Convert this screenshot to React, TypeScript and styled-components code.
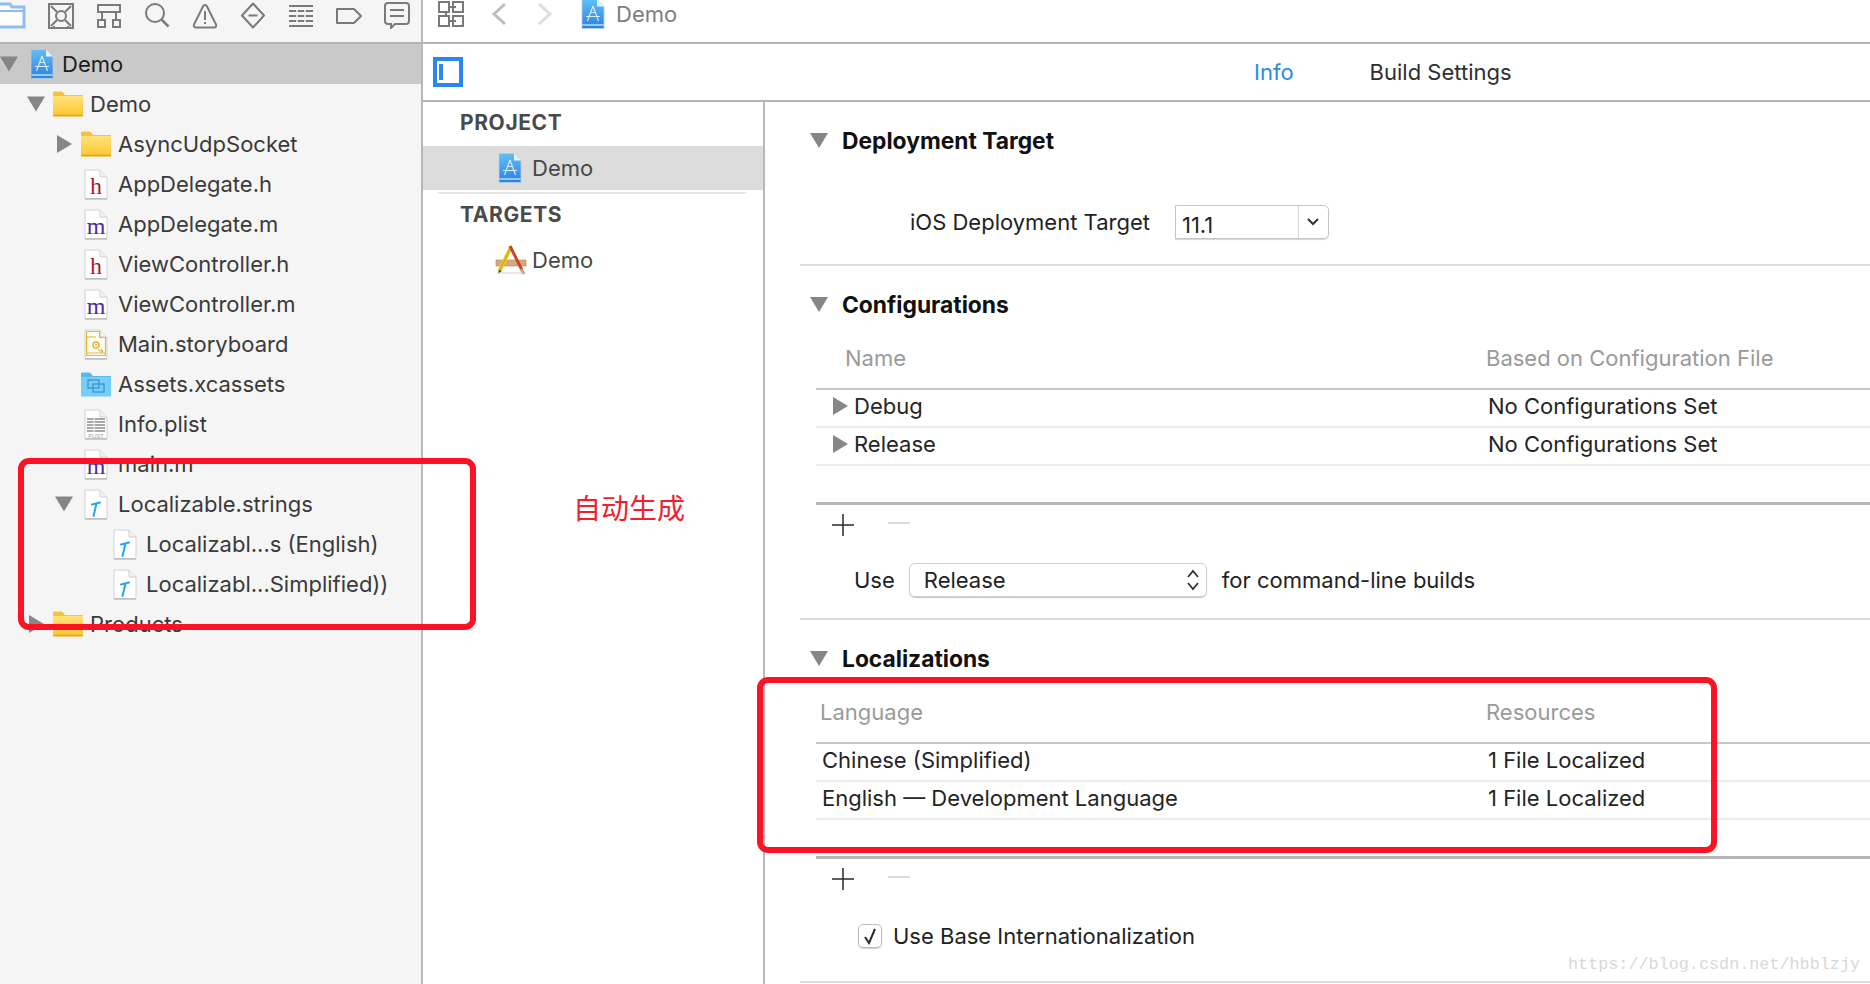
import React from "react";
import styled, { createGlobalStyle } from "styled-components";

const GlobalStyle = createGlobalStyle`
  html, body { margin: 0; padding: 0; background: #fff; }
  body { font-family: Inter, Roboto, "Liberation Sans", sans-serif; font-size: 22px; }
  * { box-sizing: border-box; }
`;

const Page = styled.div`
  position: relative;
  display: grid;
  grid-template-columns: 423px 1fr;
  width: 1870px;
  height: 984px;
  overflow: hidden;
`;

/* navigator */
const Navigator = styled.div`
  background: #f5f5f5;
  border-right: 2px solid #b8b8b8;
  height: 984px;
  overflow: hidden;
`;
const NavTools = styled.div`
  display: flex;
  gap: 22px;
  height: 44px;
  padding: 2px 0 0 0;
  border-bottom: 2px solid #b4b4b4;
  svg { display: block; flex: none; }
`;
const NavRow = styled.div<{ $depth: number; $selected?: boolean }>`
  position: relative;
  display: flex;
  align-items: center;
  height: 40px;
  padding-left: ${(p) => [29, 53, 81, 111][p.$depth]}px;
  background: ${(p) => (p.$selected ? "#c9c9c9" : "transparent")};
  color: ${(p) => (p.$selected ? "#1c1c1c" : "#3a3a3a")};
  font-size: 22px;
`;
const NavIcon = styled.span<{ $w: number }>`
  display: flex;
  justify-content: center;
  width: ${(p) => p.$w}px;
  flex: none;
  margin-right: 7px;
`;
const Arrow = styled.span<{ $open?: boolean; $size?: number }>`
  flex: none;
  width: 0;
  height: 0;
  ${(p) =>
    p.$open
      ? `border-left: ${p.$size ?? 9}px solid transparent;
         border-right: ${p.$size ?? 9}px solid transparent;
         border-top: 15px solid #868686;`
      : `border-top: ${p.$size ?? 9}px solid transparent;
         border-bottom: ${p.$size ?? 9}px solid transparent;
         border-left: 15px solid #868686;`}
`;
const NavArrow = styled.span<{ $left: number }>`
  position: absolute;
  left: ${(p) => p.$left}px;
  top: 50%;
  transform: translateY(-50%);
  display: flex;
`;

/* editor */
const Editor = styled.div`
  display: flex;
  flex-direction: column;
  min-width: 0;
`;
const JumpBar = styled.div`
  display: flex;
  align-items: center;
  height: 44px;
  padding: 0 0 14px 15px;
  border-bottom: 2px solid #b4b4b4;
  color: #7d7d7d;
  font-size: 22px;
`;
const JumpIcon = styled.span<{ $gap: number }>`
  display: flex;
  margin-right: ${(p) => p.$gap}px;
`;
const TabBar = styled.div`
  display: flex;
  align-items: center;
  height: 58px;
  padding-left: 10px;
  border-bottom: 2px solid #b4b4b4;
`;
const Tabs = styled.div`
  display: flex;
  gap: 76px;
  margin-left: 791px;
`;
const Tab = styled.span<{ $active?: boolean }>`
  color: ${(p) => (p.$active ? "#2b8ae6" : "#2e2e2e")};
`;
const EditorBody = styled.div`
  display: grid;
  grid-template-columns: 342px 1fr;
  flex: 1;
`;

/* project list */
const ProjectList = styled.div`
  border-right: 2px solid #b8b8b8;
  padding-top: 0;
`;
const ListTitle = styled.div`
  display: flex;
  align-items: center;
  height: 44px;
  padding: 0 0 4px 37px;
  color: #4a4a4a;
  font-weight: 700;
  font-size: 21px;
  letter-spacing: 0.6px;
`;
const ListItem = styled.div<{ $selected?: boolean; $left: number; $gap: number }>`
  display: flex;
  align-items: center;
  height: 44px;
  padding-left: ${(p) => p.$left}px;
  color: #474747;
  font-size: 22px;
  background: ${(p) => (p.$selected ? "#dcdcdc" : "transparent")};
  svg { margin-right: ${(p) => p.$gap}px; flex: none; }
`;
const ListRule = styled.div`
  height: 2px;
  margin: 2px 17px 0 15px;
  background: #e6e6e6;
`;

/* info panel */
const InfoPanel = styled.div`
  min-width: 0;
  overflow: hidden;
`;
const Section = styled.div<{ $bottom: number }>`
  margin-left: 35px;
  padding: 18px 0 ${(p) => p.$bottom}px;
  border-bottom: 2px solid #dedede;
`;
const SectionHead = styled.div`
  display: flex;
  align-items: center;
  gap: 14px;
  height: 40px;
  padding-left: 10px;
  color: #111;
  font-weight: 700;
  font-size: 22.8px;
`;
const FieldRow = styled.div<{ $top: number; $left: number }>`
  display: flex;
  align-items: center;
  height: 34px;
  margin-top: ${(p) => p.$top}px;
  padding-left: ${(p) => p.$left}px;
  color: #222;
  font-size: 22px;
`;
const Combo = styled.div`
  display: flex;
  width: 154px;
  height: 34px;
  margin-left: 25px;
  border: 1px solid #c6c6c6;
  border-radius: 0 5px 5px 0;
  box-shadow: 0 1px 1px #d4d4d4;
  color: #222;
`;
const ComboValue = styled.div`
  flex: 1;
  padding: 5px 0 0 6px;
  line-height: 28px;
  font-size: 22px;
`;
const ComboButton = styled.div`
  display: flex;
  align-items: center;
  justify-content: center;
  width: 30px;
  border-left: 1px solid #d4d4d4;
`;
const PopUp = styled.div`
  display: flex;
  align-items: center;
  justify-content: space-between;
  width: 298px;
  height: 34px;
  margin: 0 15px 0 14px;
  padding: 0 6px 0 14px;
  border: 1px solid #d0d0d0;
  border-radius: 6px;
  box-shadow: 0 1px 1px #c4c4c4;
`;
const Table = styled.div`
  margin: 14px 0 0 16px;
`;
const TableHead = styled.div`
  display: grid;
  grid-template-columns: 670px 1fr;
  align-items: start;
  height: 52px;
  line-height: 40px;
  border-bottom: 2px solid #c6c6c6;
  color: #9a9a9a;
  font-size: 22px;
`;
const TableRow = styled.div`
  display: grid;
  grid-template-columns: 670px 1fr;
  align-items: center;
  height: 38px;
  padding-bottom: 4px;
  border-bottom: 2px solid #ececec;
  color: #242424;
  font-size: 22px;
`;
const Cell = styled.div<{ $left: number }>`
  display: flex;
  align-items: center;
  padding-left: ${(p) => p.$left}px;
`;
const RowArrow = styled.span`
  display: flex;
  margin-right: 6px;
`;
const TableFoot = styled.div`
  display: flex;
  align-items: center;
  gap: 34px;
  height: 43px;
  margin: 36px 0 0 16px;
  padding: 0 0 0 16px;
  border-top: 3px solid #b6b6b6;
`;
const CheckBox = styled.span`
  display: flex;
  align-items: center;
  justify-content: center;
  width: 24px;
  height: 24px;
  margin-right: 11px;
  border: 1px solid #bdbdbd;
  border-radius: 5px;
  box-shadow: 0 1px 1px #d0d0d0;
`;

/* annotations drawn over the screenshot */
const RedBox = styled.div<{ $x: number; $y: number; $w: number; $h: number }>`
  position: absolute;
  left: ${(p) => p.$x}px;
  top: ${(p) => p.$y}px;
  width: ${(p) => p.$w}px;
  height: ${(p) => p.$h}px;
  border: 6px solid #fb1324;
  border-radius: 11px;
`;
const RedNote = styled.div`
  position: absolute;
  left: 573px;
  top: 489px;
  color: #f0202c;
  font-family: "Noto Sans CJK SC", sans-serif;
  font-size: 28px;
  line-height: 36px;
`;
const Watermark = styled.div`
  position: absolute;
  left: 1568px;
  top: 954px;
  color: #d8d8d8;
  font-family: "Liberation Mono", monospace;
  font-size: 16.8px;
  line-height: 22px;
`;

/* icons */
const Stroke = { fill: "none", stroke: "#7a7a7a", strokeWidth: 2 };

const NavigatorIcons = () => (
  <>
    <svg width="26" height="27" viewBox="0 0 26 27">
      <path d="M0 2h10l2 3h12v20H0" fill="#fff" stroke="#8fbcf5" strokeWidth="3" />
      <path d="M0 9h24" stroke="#8fbcf5" strokeWidth="2" />
    </svg>
    <svg width="26" height="27" viewBox="0 0 26 27" {...Stroke}>
      <rect x="1" y="2" width="24" height="24" />
      <circle cx="13" cy="14" r="5" />
      <path d="M3 4l6 6M23 4l-6 6M3 24l6-6M23 24l-6-6M6 26v-2M20 26v-2" />
    </svg>
    <svg width="26" height="27" viewBox="0 0 26 27" {...Stroke}>
      <rect x="2" y="3" width="22" height="7" />
      <path d="M6 10v7M20 10v7" />
      <rect x="2" y="18" width="7" height="7" />
      <rect x="17" y="18" width="7" height="7" />
    </svg>
    <svg width="26" height="27" viewBox="0 0 26 27" {...Stroke}>
      <circle cx="11" cy="11" r="9" />
      <path d="M17.5 17.5l7 7" strokeWidth="2.5" />
    </svg>
    <svg width="26" height="27" viewBox="0 0 26 27" {...Stroke}>
      <path d="M13 3c1 0 1.500.5 2 1.500l9 18c.6 1.300 0 3-2 3H4c-2 0-2.600-1.700-2-3l9-18c.5-1 1-1.500 2-1.500z" />
      <path d="M13 9v9M13 20v2" />
    </svg>
    <svg width="26" height="27" viewBox="0 0 26 27" {...Stroke}>
      <path d="M13 1.500l11 12-11 12-11-12z" strokeLinejoin="round" />
      <path d="M8.500 13.500h9" />
    </svg>
    <svg width="26" height="27" viewBox="0 0 26 27" {...Stroke}>
      <path d="M1 4h24M1 9h24M1 14h24M1 19h24M1 24h24" />
      <path d="M9 8v12M17 8v12" stroke="#f5f5f5" strokeWidth="1.500" />
      <path d="M1 4h24M1 24h24" />
    </svg>
    <svg width="26" height="27" viewBox="0 0 26 27" {...Stroke}>
      <path d="M1 7h17l7 7-7 7H1z" strokeLinejoin="round" />
    </svg>
    <svg width="26" height="27" viewBox="0 0 26 27" {...Stroke}>
      <path d="M4 1h18c2 0 3 1 3 3v15c0 2-1 3-3 3H11l-4 4v-4H4c-2 0-3-1-3-3V4c0-2 1-3 3-3z" />
      <path d="M6 8h14M6 14h14" />
    </svg>
  </>
);

const ProjectIcon = () => (
  <svg width="24" height="30" viewBox="0 0 24 30">
    <defs>
      <linearGradient id="projBlue" x1="0" y1="0" x2="0" y2="1">
        <stop offset="0" stopColor="#62bdf6" />
        <stop offset="1" stopColor="#2a82e4" />
      </linearGradient>
    </defs>
    <path d="M1 .5h15l7 7v22H1z" fill="url(#projBlue)" stroke="#b8cde0" strokeWidth=".8" />
    <path d="M16 .5v7h7z" fill="#e8f2fb" />
    <path d="M12 7L6.500 22M12 7l5.500 15M5 17.500h14M9.500 13.500h5" stroke="#fff" strokeWidth="1.100" fill="none" opacity=".8" />
    <path d="M1.500 26h21" stroke="#e2f2fc" strokeWidth="1.200" />
  </svg>
);

const FolderIcon = () => (
  <svg width="30" height="26" viewBox="0 0 30 26">
    <defs>
      <linearGradient id="folderYellow" x1="0" y1="0" x2="0" y2="1">
        <stop offset="0" stopColor="#ffe27a" />
        <stop offset="1" stopColor="#fcc52e" />
      </linearGradient>
    </defs>
    <path d="M0 24V2c0-1 .5-1.500 1.500-1.500H9L12 4h18v20z" fill="#f4c23e" />
    <path d="M0 5h30v19c0 1-.5 1.500-1.500 1.500h-27C.5 25.500 0 25 0 24z" fill="url(#folderYellow)" />
    <path d="M0 24.500h30" stroke="#dfa520" strokeWidth="1.500" />
  </svg>
);

const AssetsIcon = () => (
  <svg width="30" height="25" viewBox="0 0 30 25">
    <path d="M0 23V2c0-1 .5-1.500 1.500-1.500H9L12 4h18v19z" fill="#5cb8ef" />
    <path d="M0 5h30v18c0 1-.5 1.500-1.500 1.500h-27C.5 24.500 0 24 0 23z" fill="#75cdf8" />
    <rect x="7" y="8" width="11" height="8" fill="none" stroke="#3d93cf" strokeWidth="1.300" />
    <rect x="12" y="12" width="11" height="8" fill="none" stroke="#3d93cf" strokeWidth="1.300" />
  </svg>
);

const DocPage = ({ children }: { children?: React.ReactNode }) => (
  <svg width="24" height="31" viewBox="0 0 24 31">
    <path d="M1 1h15l7 7v21.500H1z" fill="#fff" stroke="#d2d2d2" />
    <path d="M16 1v7h7" fill="#f2f2f2" stroke="#d2d2d2" />
    <path d="M1 30h22" stroke="#bcbcbc" strokeWidth="1.500" />
    {children}
  </svg>
);

const LetterIcon = ({ letter, color }: { letter: string; color: string }) => (
  <DocPage>
    <text x="12" y="25" textAnchor="middle" fill={color} fontFamily="'Liberation Serif', serif" fontSize="24">
      {letter}
    </text>
  </DocPage>
);

const HammerIcon = () => (
  <DocPage>
    <path d="M8 15.500l8-2M12.500 14.500L9.500 27" stroke="#22a7ee" strokeWidth="2" fill="none" strokeLinecap="round" />
  </DocPage>
);

const StoryboardIcon = () => (
  <DocPage>
    <path d="M2.500 2.500h13v6h6v18h-19z" fill="#fffdf2" stroke="#eab530" strokeWidth="1.200" />
    <path d="M3 8h9M3 24h18" stroke="#eab530" strokeWidth="1" />
    <circle cx="12" cy="16" r="3" fill="none" stroke="#eab530" strokeWidth="1.600" />
    <circle cx="12" cy="16" r="1" fill="#eab530" />
    <path d="M14 20c0 2 2 2 5 2M17 20l2 2-2 2" stroke="#d8a42a" fill="none" strokeWidth="1" />
  </DocPage>
);

const PlistIcon = () => (
  <DocPage>
    <path d="M3 10h18M3 13h18M3 16h18M3 19h18M3 22h18" stroke="#a8a8a8" strokeWidth="1.800" />
    <path d="M10 9v14" stroke="#fff" strokeWidth="1" />
    <text x="12" y="29" textAnchor="middle" fill="#a0a0a0" fontFamily="'Liberation Sans', sans-serif" fontSize="5.500">PLIST</text>
  </DocPage>
);

const AppTargetIcon = () => (
  <svg width="32" height="30" viewBox="0 0 32 30">
    <path d="M1 15h30v6H1z" fill="#d9a877" stroke="#b9885a" strokeWidth=".6" />
    <path d="M4 27l12-25" stroke="#f0c81e" strokeWidth="4" />
    <path d="M4 27l12-25" stroke="#8a8a3a" strokeWidth=".6" />
    <path d="M15 1l12 24" stroke="#c8452e" strokeWidth="3" />
    <path d="M26 24l3 5" stroke="#d0a080" strokeWidth="3" />
    <path d="M3 29l1.500-4 2 1z" fill="#333" />
    <path d="M4 28h24" stroke="#cfcfcf" strokeWidth="1" />
  </svg>
);

const PanelToggle = () => (
  <svg width="30" height="30" viewBox="0 0 30 30">
    <rect x="2" y="2" width="26" height="26" fill="#fff" stroke="#2a85f5" strokeWidth="4" />
    <rect x="6" y="7" width="4" height="16" fill="#2a85f5" />
  </svg>
);

const RelatedItems = () => (
  <svg width="26" height="26" viewBox="0 0 26 26" {...Stroke}>
    <rect x="1" y="1" width="10" height="10" />
    <rect x="15" y="1" width="10" height="10" />
    <rect x="1" y="15" width="10" height="10" />
    <rect x="15" y="15" width="10" height="10" />
    <path d="M11 6h7M8 15v-4M11 20h7" />
  </svg>
);

const Chevron = ({ dir, color }: { dir: "left" | "right"; color: string }) => (
  <svg width="16" height="24" viewBox="0 0 16 24" fill="none" stroke={color} strokeWidth="3">
    <path d={dir === "left" ? "M14 2L3 12l11 10" : "M2 2l11 10L2 22"} />
  </svg>
);

const SmallDown = () => (
  <svg width="14" height="10" viewBox="0 0 14 10" fill="none" stroke="#333" strokeWidth="2">
    <path d="M2 2l5 5 5-5" />
  </svg>
);

const Stepper = () => (
  <svg width="14" height="24" viewBox="0 0 14 24" fill="none" stroke="#333" strokeWidth="1.800">
    <path d="M2 9l5-6 5 6M2 15l5 6 5-6" />
  </svg>
);

const PlusIcon = () => (
  <svg width="22" height="24" viewBox="0 0 22 24" stroke="#2a2a2a" strokeWidth="1.500">
    <path d="M0 12h22M11 1v22" />
  </svg>
);

const MinusIcon = () => (
  <svg width="22" height="24" viewBox="0 0 22 24" stroke="#dcdcdc" strokeWidth="2">
    <path d="M0 10h22" />
  </svg>
);

const CheckMark = () => (
  <svg width="16" height="18" viewBox="0 0 16 18" fill="none" stroke="#2a2a2a" strokeWidth="2">
    <path d="M3 10l4 6 6-14" />
  </svg>
);

type NavItem = {
  label: string;
  depth: number;
  icon: React.ReactNode;
  width: number;
  arrow?: "open" | "closed";
  arrowLeft?: number;
  selected?: boolean;
};

const red = "#a8182c";
const violet = "#4a2a96";

const navItems: NavItem[] = [
  { label: "Demo", depth: 0, icon: <ProjectIcon />, width: 26, arrow: "open", arrowLeft: 0, selected: true },
  { label: "Demo", depth: 1, icon: <FolderIcon />, width: 30, arrow: "open", arrowLeft: 27 },
  { label: "AsyncUdpSocket", depth: 2, icon: <FolderIcon />, width: 30, arrow: "closed", arrowLeft: 57 },
  { label: "AppDelegate.h", depth: 2, icon: <LetterIcon letter="h" color={red} />, width: 30 },
  { label: "AppDelegate.m", depth: 2, icon: <LetterIcon letter="m" color={violet} />, width: 30 },
  { label: "ViewController.h", depth: 2, icon: <LetterIcon letter="h" color={red} />, width: 30 },
  { label: "ViewController.m", depth: 2, icon: <LetterIcon letter="m" color={violet} />, width: 30 },
  { label: "Main.storyboard", depth: 2, icon: <StoryboardIcon />, width: 30 },
  { label: "Assets.xcassets", depth: 2, icon: <AssetsIcon />, width: 30 },
  { label: "Info.plist", depth: 2, icon: <PlistIcon />, width: 30 },
  { label: "main.m", depth: 2, icon: <LetterIcon letter="m" color={violet} />, width: 30 },
  { label: "Localizable.strings", depth: 2, icon: <HammerIcon />, width: 30, arrow: "open", arrowLeft: 55 },
  { label: "Localizabl...s (English)", depth: 3, icon: <HammerIcon />, width: 28 },
  { label: "Localizabl...Simplified))", depth: 3, icon: <HammerIcon />, width: 28 },
  { label: "Products", depth: 1, icon: <FolderIcon />, width: 30, arrow: "closed", arrowLeft: 29 },
];

export default function App() {
  return (
    <>
      <GlobalStyle />
      <Page>
        <Navigator>
          <NavTools>
            <NavigatorIcons />
          </NavTools>
          {navItems.map((item, i) => (
            <NavRow key={i} $depth={item.depth} $selected={item.selected}>
              {item.arrow && (
                <NavArrow $left={item.arrowLeft ?? 0}>
                  <Arrow $open={item.arrow === "open"} />
                </NavArrow>
              )}
              <NavIcon $w={item.width}>{item.icon}</NavIcon>
              {item.label}
            </NavRow>
          ))}
        </Navigator>

        <Editor>
          <JumpBar>
            <JumpIcon $gap={27}><RelatedItems /></JumpIcon>
            <JumpIcon $gap={30}><Chevron dir="left" color="#bdbdbd" /></JumpIcon>
            <JumpIcon $gap={28}><Chevron dir="right" color="#dedede" /></JumpIcon>
            <JumpIcon $gap={11}><ProjectIcon /></JumpIcon>
            Demo
          </JumpBar>
          <TabBar>
            <PanelToggle />
            <Tabs>
              <Tab $active>Info</Tab>
              <Tab>Build Settings</Tab>
            </Tabs>
          </TabBar>
          <EditorBody>
            <ProjectList>
              <ListTitle>PROJECT</ListTitle>
              <ListItem $selected $left={75} $gap={10}><ProjectIcon />Demo</ListItem>
              <ListRule />
              <ListTitle>TARGETS</ListTitle>
              <ListItem $left={72} $gap={5}><AppTargetIcon />Demo</ListItem>
            </ProjectList>
            <InfoPanel>
              <Section $bottom={25}>
                <SectionHead><Arrow $open />Deployment Target</SectionHead>
                <FieldRow $top={45} $left={110}>
                  iOS Deployment Target
                  <Combo>
                    <ComboValue>11.1</ComboValue>
                    <ComboButton><SmallDown /></ComboButton>
                  </Combo>
                </FieldRow>
              </Section>

              <Section $bottom={21}>
                <SectionHead><Arrow $open />Configurations</SectionHead>
                <Table>
                  <TableHead>
                    <Cell $left={29}>Name</Cell>
                    <Cell $left={0}>Based on Configuration File</Cell>
                  </TableHead>
                  <TableRow>
                    <Cell $left={17}><RowArrow><Arrow $size={9} /></RowArrow>Debug</Cell>
                    <Cell $left={2}>No Configurations Set</Cell>
                  </TableRow>
                  <TableRow>
                    <Cell $left={17}><RowArrow><Arrow $size={9} /></RowArrow>Release</Cell>
                    <Cell $left={2}>No Configurations Set</Cell>
                  </TableRow>
                </Table>
                <TableFoot><PlusIcon /><MinusIcon /></TableFoot>
                <FieldRow $top={18} $left={54}>
                  Use
                  <PopUp>Release<Stepper /></PopUp>
                  for command-line builds
                </FieldRow>
              </Section>

              <Section $bottom={28}>
                <SectionHead><Arrow $open />Localizations</SectionHead>
                <Table>
                  <TableHead>
                    <Cell $left={4}>Language</Cell>
                    <Cell $left={0}>Resources</Cell>
                  </TableHead>
                  <TableRow>
                    <Cell $left={6}>Chinese (Simplified)</Cell>
                    <Cell $left={2}>1 File Localized</Cell>
                  </TableRow>
                  <TableRow>
                    <Cell $left={6}>English — Development Language</Cell>
                    <Cell $left={2}>1 File Localized</Cell>
                  </TableRow>
                </Table>
                <TableFoot><PlusIcon /><MinusIcon /></TableFoot>
                <FieldRow $top={20} $left={58}>
                  <CheckBox><CheckMark /></CheckBox>
                  Use Base Internationalization
                </FieldRow>
              </Section>
            </InfoPanel>
          </EditorBody>
        </Editor>

        <RedBox $x={18} $y={458} $w={458} $h={172} />
        <RedBox $x={757} $y={677} $w={960} $h={176} />
        <RedNote>自动生成</RedNote>
        <Watermark>https://blog.csdn.net/hbblzjy</Watermark>
      </Page>
    </>
  );
}
